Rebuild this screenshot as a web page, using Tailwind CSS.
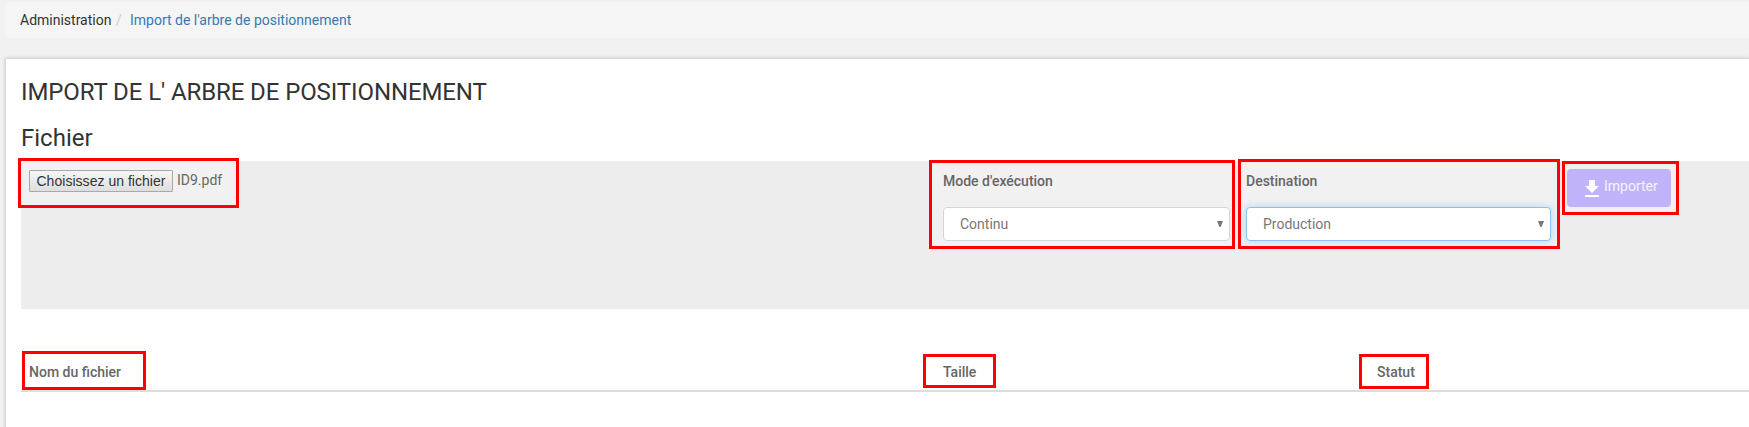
<!DOCTYPE html>
<html lang="fr">
<head>
<meta charset="utf-8">
<title>Import de l'arbre de positionnement</title>
<script src="https://cdn.jsdelivr.net/npm/@tailwindcss/browser@4"></script>
</head>
<body class="h-[427px] overflow-hidden bg-[#f1f1f1] pt-[2px] font-['Roboto',sans-serif] text-[14px] leading-5 text-[#666]">
  <nav class="ml-[5px] flex h-9 items-center rounded-l pb-[1px] pl-[15px] bg-[#f5f5f5]">
    <span class="w-[91px] whitespace-nowrap text-[#333]">Administration</span>
    <span class="w-[19px] pl-[5px] text-[#ccc]">/</span>
    <a class="whitespace-nowrap text-[#337ab7]">Import de l'arbre de positionnement</a>
  </nav>

  <main class="mt-[21px] ml-[6px] h-[380px] bg-white pt-[20px] pl-[15px] shadow-[0_0_3px_1px_#c8c8c8]">
    <h1 class="h-[45px] whitespace-nowrap text-[24px] leading-[26px] tracking-[-0.1px] text-[#333]">IMPORT DE L' ARBRE DE POSITIONNEMENT</h1>
    <h2 class="h-[37px] text-[24px] leading-[28px] text-[#333]">Fichier</h2>

    <section class="relative flex h-[148px] bg-[#ededed]">
      <div class="absolute -left-[3px] -top-[3px] h-[50px] w-[221px] border-[3px] border-[#f00]"></div>
      <div class="absolute left-[908px] -top-[1px] h-[89px] w-[306px] border-[3px] border-[#f00] bg-[#f1f1f1]"></div>
      <div class="absolute left-[1217px] -top-[2px] h-[90px] w-[322px] border-[3px] border-[#f00] bg-[#f1f1f1]"></div>
      <div class="absolute left-[1541px] top-0 h-[54px] w-[117px] border-[3px] border-[#f00] bg-[#f1f1f1]"></div>

      <div class="h-[44px] w-[215px] bg-[#f1f1f1] pt-[9px] pl-2">
        <div class="flex">
          <button class="h-[22px] w-[144px] whitespace-nowrap rounded-[1px] border border-[#a9a9a9] bg-linear-to-b from-[#f6f6f6] to-[#dedede] font-['Liberation_Sans',sans-serif] text-[14px] leading-5 tracking-[0.03px] text-[#333]">Choisissez un fichier</button>
          <span class="pl-1 leading-[20px]">ID9.pdf</span>
        </div>
      </div>

      <div class="relative ml-[707px] w-[303px] pt-[10px]">
        <div class="h-9 font-medium">Mode d'exécution</div>
        <div class="flex h-[34px] w-[287px] items-center justify-between rounded border border-[#d6d6d6] bg-white pr-[6px] pl-4 text-[#777]">
          <span>Continu</span>
          <svg class="mt-[-1px]" width="6" height="6" viewBox="0 0 6 6" fill="#777"><path d="M0 0h6L3.6 6H2.4z"/></svg>
        </div>
      </div>

      <div class="relative w-[321px] pt-[10px]">
        <div class="h-9 font-medium">Destination</div>
        <div class="flex h-[34px] w-[305px] items-center justify-between rounded border border-[#8ac1ee] bg-white pr-[6px] pl-4 text-[#777] shadow-[0_0_8px_rgba(102,175,233,0.4)]">
          <span>Production</span>
          <svg class="mt-[-1px]" width="6" height="6" viewBox="0 0 6 6" fill="#777"><path d="M0 0h6L3.6 6H2.4z"/></svg>
        </div>
      </div>

      <button class="relative mt-2 flex h-[38px] w-[104px] rounded bg-[#c1b3fa] pt-[7px] pl-[18px] text-[#f6f3ff]">
        <svg class="mt-1 shrink-0" width="14" height="17" viewBox="0 0 14 17" fill="#fff"><path d="M14 6h-4V0H4v6H0l7 7zM0 15v2h14v-2z"/></svg>
        <span class="pl-[5px]">Importer</span>
      </button>
    </section>

    <section class="relative mt-[42px] flex h-[41px] border-b-2 border-[#ddd] pt-[11px] pl-2 font-medium">
      <div class="w-[914px]">Nom du fichier</div>
      <div class="w-[434px]">Taille</div>
      <div>Statut</div>
      <div class="absolute left-[1px] top-0 h-[39px] w-[124px] border-[3px] border-[#f00]"></div>
      <div class="absolute left-[902px] top-[3px] h-[34px] w-[73px] border-[3px] border-[#f00]"></div>
      <div class="absolute left-[1338px] top-[3px] h-[35px] w-[70px] border-[3px] border-[#f00]"></div>
    </section>
  </main>
</body>
</html>
